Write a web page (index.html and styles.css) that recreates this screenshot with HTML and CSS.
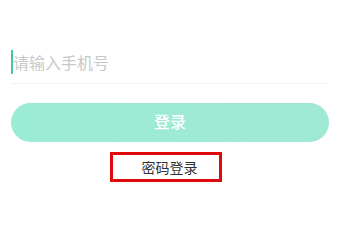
FILE: index.html
```html
<!DOCTYPE html>
<html lang="zh">
<head>
<meta charset="utf-8">
<link rel="stylesheet" href="styles.css">
</head>
<body>
<div class="page">
  <div class="field">
    <span class="cursor"></span>
    <span class="placeholder">请输入手机号</span>
  </div>
  <div class="login-btn">登录</div>
  <div class="alt-login">密码登录</div>
</div>
</body>
</html>
```
FILE: styles.css
```css
html, body {
  margin: 0;
  padding: 0;
  background: #ffffff;
}
body {
  font-family: "Noto Sans CJK SC", "Noto Sans", sans-serif;
}
.page {
  width: 318px;
  margin-left: 11px;
  padding-top: 50px;
}
.field {
  display: flex;
  align-items: center;
  padding-bottom: 9px;
  border-bottom: 1px solid #f2f2f2;
}
.cursor {
  width: 2px;
  height: 24px;
  background: #3cc8a0;
}
.placeholder {
  font-size: 16px;
  line-height: 24px;
  color: #c8c8c8;
}
.login-btn {
  margin-top: 19px;
  height: 39px;
  border-radius: 20px;
  background: linear-gradient(90deg, #9becd5, #9fe8d4);
  color: #ffffff;
  font-size: 16px;
  font-weight: 500;
  line-height: 37px;
  text-align: center;
}
.alt-login {
  box-sizing: border-box;
  margin-top: 10px;
  margin-left: 99px;
  width: 112px;
  height: 30px;
  border: 3px solid #e10a0a;
  padding-left: 7px;
  font-size: 14px;
  line-height: 24px;
  color: #333333;
  text-align: center;
}
```
